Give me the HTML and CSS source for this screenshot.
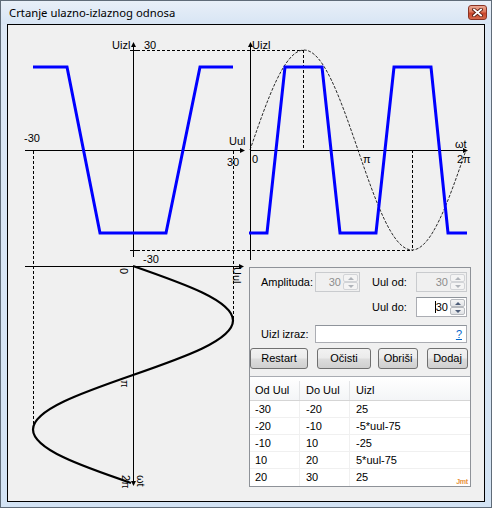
FILE: index.html
```html
<!DOCTYPE html>
<html>
<head>
<meta charset="utf-8">
<title>Crtanje ulazno-izlaznog odnosa</title>
<link rel="stylesheet" href="styles.css">
</head>
<body>
<div class="window">
  <div class="titlebar">
    <span class="title">Crtanje ulazno-izlaznog odnosa</span>
    <button class="close" aria-label="Zatvori">
      <svg width="11" height="9" viewBox="0 0 11 9">
        <path d="M2 1.5 L9 7.5 M9 1.5 L2 7.5" stroke="#5b1d10" stroke-width="3.6" stroke-linecap="square"/>
        <path d="M2 1.5 L9 7.5 M9 1.5 L2 7.5" stroke="#ffffff" stroke-width="1.8" stroke-linecap="square"/>
      </svg>
    </button>
  </div>
  <div class="client">
    <svg class="canvas" width="476" height="476" viewBox="8 25 476 476">
      <!-- dashed helper lines -->
      <g class="dash">
        <path d="M137 50.5 H303"/>
        <path d="M303.5 50 V150"/>
        <path d="M137 250.5 H413"/>
        <path d="M412.5 150 V250"/>
        <path d="M33.5 151 V430"/>
        <path d="M233.5 151 V320"/>
      </g>
      <!-- sine (top right) -->
      <path class="sine" d="M250 150 C267.61 98.77 284.46 50 304 50 C323.54 50 340.39 98.77 358 150 C375.61 201.23 392.46 250 412 250 C431.54 250 448.39 201.23 466 150"/>
      <!-- axes -->
      <g class="axis">
        <path d="M25 150.5 H241"/>
        <path d="M133.5 46 V257"/>
        <path d="M130 50.5 H137"/>
        <path d="M130 250.5 H137"/>
        <path d="M250.5 46 V260"/>
        <path d="M250 150.5 H464"/>
        <path d="M25 266.5 H240"/>
        <path d="M133.5 266 V481"/>
      </g>
      <g class="arrow">
        <polygon points="245,150.5 240,148 240,153"/>
        <polygon points="133.5,42 131,47 136,47"/>
        <polygon points="250.5,42 248,47 253,47"/>
        <polygon points="468,150.5 463,148 463,153"/>
        <polygon points="244,266.5 239,264 239,269"/>
        <polygon points="133.5,486 131,481 136,481"/>
      </g>
      <!-- blue transfer characteristic -->
      <polyline class="blue" points="33,67 67,67 100,233 166,233 200,67 233,67"/>
      <polyline class="blue" points="249,233 267,233 285,67 322,67 340,233 376,233 394,67 431,67 448,233 467,233"/>
      <!-- input sine (bottom left) -->
      <path class="input" d="M133 266 C184.23 283.77 233 300.78 233 320.5 C233 340.22 184.23 357.23 133 375 C81.77 392.77 33 409.78 33 429.5 C33 449.22 81.77 466.23 131 483"/>
      <!-- labels -->
      <g class="lbl">
        <text x="112" y="49">Uizl</text>
        <text x="144" y="49">30</text>
        <text x="24" y="142">-30</text>
        <text x="229" y="145">Uul</text>
        <text x="227" y="166">30</text>
        <text x="143" y="263">-30</text>
        <text x="252" y="49">Uizl</text>
        <text x="252" y="163">0</text>
        <text x="363" y="163">π</text>
        <text x="457" y="163">2π</text>
        <text x="455" y="148">ωt</text>
        <text transform="translate(120 268) rotate(90)">0</text>
        <text transform="translate(121 380) rotate(90)">π</text>
        <text transform="translate(122 475) rotate(90)">2π</text>
        <text transform="translate(137 475) rotate(90)">ωt</text>
        <text transform="translate(233 267) rotate(90)">Uul</text>
      </g>
    </svg>

    <div class="panel">
      <div class="row row1">
        <span class="label w54">Amplituda:</span>
        <div class="nud disabled w45">
          <span class="val">30</span>
          <span class="spin"><span class="sb up"></span><span class="sb down"></span></span>
        </div>
        <span class="label w44 ml12">Uul od:</span>
        <div class="nud disabled w51">
          <span class="val">30</span>
          <span class="spin"><span class="sb up"></span><span class="sb down"></span></span>
        </div>
      </div>
      <div class="row row2">
        <span class="label w44">Uul do:</span>
        <div class="nud w51">
          <span class="val"><span class="caret"></span>30</span>
          <span class="spin"><span class="sb up"></span><span class="sb down"></span></span>
        </div>
      </div>
      <div class="row row3">
        <span class="label w54">Uizl izraz:</span>
        <div class="textbox"><span class="help">?</span></div>
      </div>
      <div class="buttons">
        <button class="btn b-restart">Restart</button>
        <button class="btn b-ocisti">Očisti</button>
        <button class="btn b-obrisi">Obriši</button>
        <button class="btn b-dodaj">Dodaj</button>
      </div>
      <div class="listview">
        <div class="lv-head">
          <span class="c1">Od Uul</span><span class="c2">Do Uul</span><span class="c3">Uizl</span>
        </div>
        <div class="lv-row"><span class="c1">-30</span><span class="c2">-20</span><span class="c3">25</span></div>
        <div class="lv-row"><span class="c1">-20</span><span class="c2">-10</span><span class="c3">-5*uul-75</span></div>
        <div class="lv-row"><span class="c1">-10</span><span class="c2">10</span><span class="c3">-25</span></div>
        <div class="lv-row"><span class="c1">10</span><span class="c2">20</span><span class="c3">5*uul-75</span></div>
        <div class="lv-row"><span class="c1">20</span><span class="c2">30</span><span class="c3">25</span></div>
      </div>
      <span class="logo">Jmt</span>
    </div>
  </div>
</div>
</body>
</html>
```

FILE: styles.css
```css
html, body {
  margin: 0;
  padding: 0;
}
body {
  width: 492px;
  height: 508px;
  overflow: hidden;
  background: #ffffff;
}
.window {
  width: 492px;
  height: 508px;
  box-sizing: border-box;
  border: 1px solid #5f6b78;
  background: linear-gradient(#dde8f5, #d3e3f4);
  display: flex;
  flex-direction: column;
}
.titlebar {
  height: 23px;
  flex: none;
  display: flex;
  align-items: flex-start;
  justify-content: space-between;
  padding: 0 4px 0 8px;
  background: linear-gradient(#e8eff8, #d8e5f4);
}
.title {
  font: 11.3px "Noto Sans", "DejaVu Sans", sans-serif;
  line-height: 23px;
  color: #000;
}
.close {
  margin-top: 4px;
  width: 19px;
  height: 15px;
  padding: 0;
  box-sizing: border-box;
  border: 1px solid #8a3324;
  border-radius: 3px;
  background: linear-gradient(#eba996 0%, #dd7659 45%, #c8442a 55%, #d66a4b 100%);
  display: flex;
  align-items: center;
  justify-content: center;
}
.close svg { display: block; }

.client {
  margin: 0 6px;
  height: 478px;
  box-sizing: border-box;
  border: 1px solid #000;
  background: #f0f0f0;
  display: grid;
}
.canvas, .panel {
  grid-area: 1 / 1;
}
.canvas {
  display: block;
}
.canvas .dash path {
  fill: none;
  stroke: #000;
  stroke-width: 1;
  stroke-dasharray: 3 2;
  shape-rendering: crispEdges;
}
.canvas .sine {
  fill: none;
  stroke: #2a2a2a;
  stroke-width: 1;
  stroke-dasharray: 3 1.5;
}
.canvas .axis path {
  fill: none;
  stroke: #000;
  stroke-width: 1;
  shape-rendering: crispEdges;
}
.canvas .arrow polygon {
  fill: #000;
}
.canvas .blue {
  fill: none;
  stroke: #0000ff;
  stroke-width: 3;
  stroke-linejoin: miter;
}
.canvas .input {
  fill: none;
  stroke: #000;
  stroke-width: 2.2;
}
.canvas .lbl text {
  font: 11px "Liberation Sans", Arial, sans-serif;
  fill: #000;
}

/* control panel */
.panel {
  position: relative;
  margin: 242px 0 0 241px;
  align-self: start;
  justify-self: start;
  width: 222px;
  height: 220px;
  box-sizing: border-box;
  border: 1px solid #8e9298;
  background: #f0f0f0;
  display: flex;
  flex-direction: column;
  font: 11px "Liberation Sans", Arial, sans-serif;
  color: #000;
}
.row {
  display: flex;
  align-items: stretch;
}
.row1 {
  margin-top: 4px;
  height: 20px;
  padding-left: 11px;
}
.row2 {
  margin-top: 5px;
  height: 20px;
  padding-left: 122px;
}
.row3 {
  margin-top: 8px;
  height: 18px;
  padding-left: 11px;
}
.label {
  line-height: 20px;
  white-space: nowrap;
}
.row3 .label { line-height: 18px; }
.w54 { width: 54px; flex: none; }
.w45 { width: 45px; flex: none; }
.w44 { width: 44px; flex: none; }
.w51 { width: 51px; flex: none; }
.ml12 { margin-left: 12px; }

.nud {
  display: flex;
  box-sizing: border-box;
  border: 1px solid #abadb3;
  border-top-color: #8f949b;
  background: #fff;
  padding: 1px;
}
.nud .val {
  flex: 1;
  text-align: right;
  line-height: 16px;
  padding-right: 2px;
  display: flex;
  justify-content: flex-end;
  align-items: center;
}
.nud.disabled {
  background: #f0f0f0;
  border-color: #c9cbce;
}
.nud.disabled .val {
  color: #8d8d8d;
}
.caret {
  display: inline-block;
  width: 1px;
  height: 12px;
  background: #000;
  margin-right: 0;
}
.spin {
  width: 15px;
  display: flex;
  flex-direction: column;
  gap: 0;
}
.sb {
  flex: 1;
  box-sizing: border-box;
  border: 1px solid #b6b9be;
  border-radius: 2px;
  background: linear-gradient(#f6f6f6, #e0e2e5);
  display: flex;
  align-items: center;
  justify-content: center;
}
.sb::after {
  content: "";
  width: 0;
  height: 0;
  border-left: 3px solid transparent;
  border-right: 3px solid transparent;
}
.sb.up::after { border-bottom: 3px solid #4d5d78; }
.sb.down::after { border-top: 3px solid #4d5d78; }
.nud.disabled .sb { border-color: #d2d4d7; background: #f4f4f4; }
.nud.disabled .sb.up::after { border-bottom-color: #b0b4ba; }
.nud.disabled .sb.down::after { border-top-color: #b0b4ba; }

.textbox {
  width: 152px;
  box-sizing: border-box;
  border: 1px solid #abadb3;
  border-top-color: #8f949b;
  background: #fff;
  display: flex;
  justify-content: flex-end;
  align-items: center;
  padding-right: 4px;
}
.help {
  color: #0066cc;
  text-decoration: underline;
  line-height: 14px;
}

.buttons {
  display: flex;
  margin-top: 5px;
  height: 21px;
}
.btn {
  height: 21px;
  box-sizing: border-box;
  padding: 0;
  border: 1px solid #707070;
  border-radius: 3px;
  background: linear-gradient(#f2f2f2 0%, #ebebeb 48%, #dddddd 52%, #cfcfcf 100%);
  font: 11px "Liberation Sans", Arial, sans-serif;
  color: #000;
  line-height: 19px;
}
.b-restart { width: 58px; margin-left: 0; }
.b-ocisti { width: 54px; margin-left: 9px; }
.b-obrisi { width: 40px; margin-left: 7px; }
.b-dodaj { width: 41px; margin-left: 9px; }

.listview {
  margin-top: 7px;
  border-top: 1px solid #a9acb2;
  background: #fff;
  flex: 1;
  display: flex;
  flex-direction: column;
}
.lv-head, .lv-row {
  display: grid;
  grid-template-columns: 50px 50px 120px;
}
.lv-head {
  height: 24px;
  box-sizing: border-box;
  padding-top: 4px;
  line-height: 19px;
  background: linear-gradient(#ffffff, #f4f5f7);
  border-bottom: 1px solid #d5d5d5;
}
.lv-head span {
  border-right: 1px solid #e3e4e6;
}
.lv-row {
  height: 17px;
  box-sizing: border-box;
  line-height: 16px;
  border-bottom: 1px solid #f0f0f0;
}
.lv-row:last-child { border-bottom: none; }
.lv-row span {
  border-right: 1px solid #f0f0f0;
}
.c1 { padding-left: 5px; }
.c2 { padding-left: 6px; }
.c3 { padding-left: 6px; }
.lv-head .c3, .lv-row .c3 { border-right: none; }

.logo {
  position: absolute;
  right: 2px;
  bottom: 1px;
  font: bold 7px "Liberation Sans", Arial, sans-serif;
  color: #e8913a;
  letter-spacing: -0.2px;
}
```
